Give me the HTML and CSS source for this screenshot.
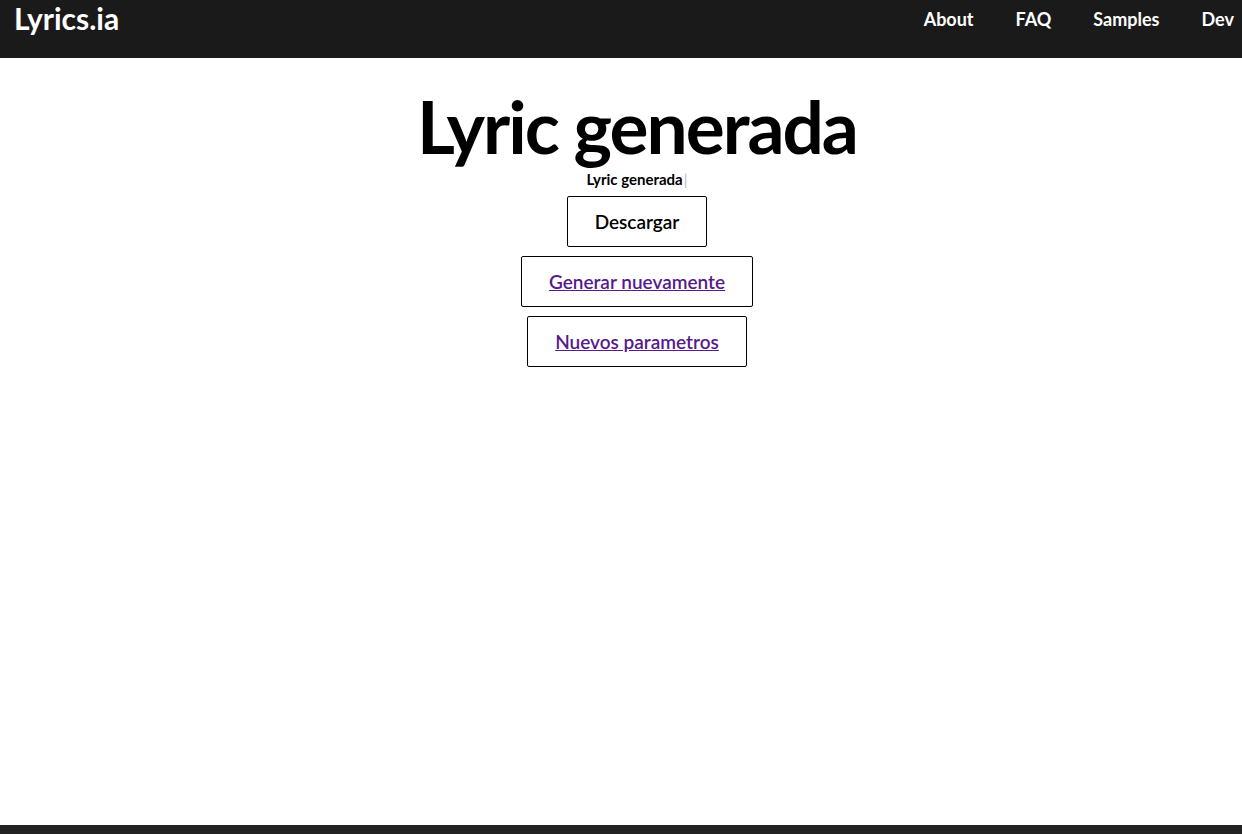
FILE: index.html
```html
<!DOCTYPE html>
<html lang="es">
<head>
<meta charset="utf-8">
<title>Lyrics.ia</title>
<link rel="stylesheet" href="styles.css">
</head>
<body>
<header class="topbar">
  <a class="logo" href="#">Lyrics.ia</a>
  <nav class="nav">
    <a href="#">About</a>
    <a href="#">FAQ</a>
    <a href="#">Samples</a>
    <a href="#">Dev</a>
  </nav>
</header>
<main class="content">
  <h1 class="title">Lyric generada</h1>
  <p class="typed">Lyric generada<span class="cursor">|</span></p>
  <div class="actions">
    <button class="btn">Descargar</button>
    <div class="btn"><a href="#">Generar nuevamente</a></div>
    <div class="btn"><a href="#">Nuevos parametros</a></div>
  </div>
</main>
<footer class="footer"></footer>
</body>
</html>
```
FILE: styles.css
```css
html, body {
  margin: 0;
  padding: 0;
  height: 100%;
}
body {
  font-family: Lato, "Noto Sans", sans-serif;
  background: #fff;
  color: #000;
  display: flex;
  flex-direction: column;
}
.topbar {
  height: 58px;
  background: #1b1a1a;
  display: flex;
  justify-content: space-between;
  align-items: flex-start;
  padding: 0 8px 0 14px;
  box-sizing: border-box;
}
.logo {
  color: #fff;
  text-decoration: none;
  font-weight: 700;
  font-size: 30px;
  line-height: 36px;
}
.nav {
  display: flex;
  gap: 42px;
  padding-top: 7px;
}
.nav a {
  color: #fff;
  text-decoration: none;
  font-weight: 700;
  font-size: 18px;
  line-height: 24px;
}
.content {
  flex: 1;
  display: flex;
  flex-direction: column;
  align-items: center;
  padding-left: 32px;
}
.title {
  margin: 24px 0 0;
  font-size: 73px;
  letter-spacing: -2px;
  line-height: 88px;
  font-weight: 700;
}
.typed {
  margin: 0;
  font-size: 15px;
  font-weight: 700;
  line-height: 18px;
}
.cursor {
  color: #bbb;
  font-weight: 400;
  margin-left: 1px;
}
.actions {
  display: flex;
  flex-direction: column;
  align-items: center;
  gap: 9px;
  margin-top: 8px;
}
.btn {
  font-family: inherit;
  background: #fff;
  border: 1px solid #000;
  border-radius: 2px;
  padding: 0 27px;
  height: 51px;
  box-sizing: border-box;
  display: flex;
  align-items: center;
  justify-content: center;
  font-size: 19px;
  font-weight: 600;
  color: #000;
}
.btn a {
  color: #551a8b;
  text-decoration: underline;
}
.footer {
  height: 9px;
  background: #222;
}
```
